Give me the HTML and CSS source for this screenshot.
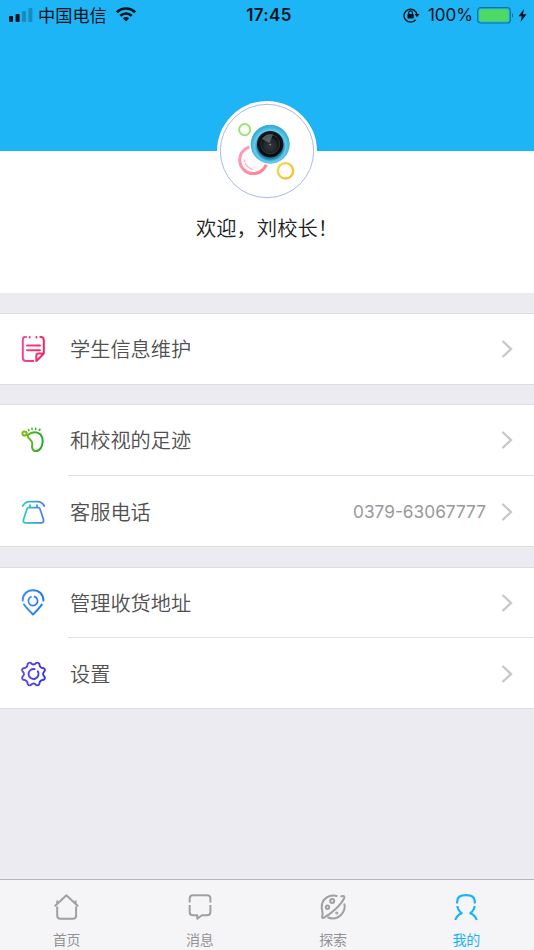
FILE: index.html
```
<!DOCTYPE html>
<html lang="zh-CN">
<head>
    <meta charset="utf-8">
    <title>我的</title>
    <link rel="stylesheet" href="styles.css">
</head>
<body>
    <div class="header">
        <div class="status-bar">
            <div class="status-left">
                <svg class="signal" width="24" height="14" viewBox="0 0 24 14">
                    <rect x="0" y="8" width="4" height="6" rx="1"/>
                    <rect x="6.6" y="6" width="4" height="8" rx="1"/>
                    <rect x="13" y="3" width="4" height="11" rx="1" opacity=".25"/>
                    <rect x="19.4" y="0" width="4" height="14" rx="1" opacity=".25"/>
                </svg>
                <span class="carrier">中国电信</span>
                <svg class="wifi" width="20" height="15" viewBox="0 0 20 15">
                    <g fill="none" stroke="#06131b" stroke-width="2.6">
                        <path d="M.9 5.3C6 .2 14 .2 19.1 5.3"/>
                        <path d="M4.3 8.8C7.5 5.7 12.5 5.7 15.7 8.8"/>
                    </g>
                    <path d="M6.9 11.3C8.7 9.7 11.3 9.7 13.1 11.3L10 14.5z" fill="#06131b"/>
                </svg>
            </div>
            <div class="time">17:45</div>
            <div class="status-right">
                <svg width="17" height="16" viewBox="0 0 17 16">
                    <path d="M12.6 12.7A6.5 6.5 0 1 1 14 8" fill="none" stroke="#06131b" stroke-width="1.4"/>
                    <path d="M11.5 7h5l-2.5 3.3z" fill="#06131b"/>
                    <rect x="4.5" y="7" width="6.2" height="4.4" rx=".6" fill="#06131b"/>
                    <path d="M5.8 7V5.6a1.8 1.8 0 0 1 3.6 0V7" fill="none" stroke="#06131b" stroke-width="1.2"/>
                </svg>
                <span class="percent">100%</span>
                <svg class="battery" width="38" height="17" viewBox="0 0 38 17">
                    <rect x=".7" y=".7" width="32.6" height="15.3" rx="3" fill="none" stroke="#176f96" stroke-width="1.2"/>
                    <rect x="2.3" y="2.3" width="29.4" height="12.1" rx="1.5" fill="#4cd964"/>
                    <path d="M35 5.8q2.3 2.6 0 5.2z" fill="#176f96"/>
                </svg>
                <svg width="9" height="13" viewBox="0 0 9 13">
                    <path d="M6 0L.5 7.3h3.3L2.6 13 8.5 5.3H5z" fill="#06131b"/>
                </svg>
            </div>
        </div>
    </div>

    <div class="profile">
        <div class="avatar">
            <svg width="100" height="100" viewBox="0 0 100 100">
                <defs>
                    <radialGradient id="ring" cx=".5" cy=".55" r=".5">
                        <stop offset=".65" stop-color="#1f7fa8"/>
                        <stop offset=".8" stop-color="#64cdee"/>
                        <stop offset="1" stop-color="#3caed6"/>
                    </radialGradient>
                    <radialGradient id="lens" cx=".5" cy=".55" r=".5">
                        <stop offset="0" stop-color="#34383b"/>
                        <stop offset=".5" stop-color="#20262a"/>
                        <stop offset=".75" stop-color="#070a0c"/>
                        <stop offset="1" stop-color="#15191c"/>
                    </radialGradient>
                    <linearGradient id="pink" x1="0" y1="0" x2="1" y2="1">
                        <stop offset="0" stop-color="#f3a5bd"/>
                        <stop offset="1" stop-color="#ff7f91"/>
                    </linearGradient>
                    <linearGradient id="yellow" x1="0" y1="0" x2="1" y2="1">
                        <stop offset="0" stop-color="#f2dc4c"/>
                        <stop offset="1" stop-color="#f2bd2c"/>
                    </linearGradient>
                </defs>
                <circle cx="50" cy="50" r="50" fill="#fff"/>
                <circle cx="50" cy="50" r="46.7" fill="none" stroke="#a9baf0"/>
                <circle cx="27.7" cy="28.7" r="5.6" fill="none" stroke="#9be475" stroke-width="2"/>
                <circle cx="36.3" cy="59" r="13.6" fill="#fffafb" stroke="url(#pink)" stroke-width="3"/>
                <path d="M28 62q3 5.5 8 6.5M27 58.5q1 1.5 1 2.5" fill="none" stroke="#ffabb8" stroke-width="1.2"/>
                <circle cx="53.2" cy="43.2" r="21" fill="#fff"/>
                <circle cx="53.2" cy="43.2" r="19.5" fill="url(#ring)"/>
                <circle cx="53.2" cy="43.2" r="13.2" fill="url(#lens)"/>
                <circle cx="53.2" cy="43.2" r="9.5" fill="none" stroke="#454b4e" stroke-width=".7"/>
                <path d="M45 38q4-6 11-4.5l-3.5 8.5z" fill="#7b858a" opacity=".6"/>
                <circle cx="53.2" cy="43.5" r=".8" fill="#91a5aa"/>
                <circle cx="68.5" cy="69.8" r="7.7" fill="#fffefa" stroke="url(#yellow)" stroke-width="2.3"/>
            </svg>
        </div>
        <div class="welcome">欢迎，刘校长！</div>
    </div>

    <div class="group">
        <div class="row">
            <svg class="icon" viewBox="0 0 30 30" stroke="url(#gPink)">
                <defs>
                    <linearGradient id="gPink" gradientUnits="userSpaceOnUse" x1="4" y1="0" x2="27" y2="0">
                        <stop offset="0" stop-color="#f7449b"/>
                        <stop offset="1" stop-color="#f4235c"/>
                    </linearGradient>
                </defs>
                <path d="M6.5 3Q4.8 3.3 4.8 6V23.5Q4.8 27 8.3 27H15.3M23.3 3Q25.8 3.3 25.8 6.5V19.5L18.5 27M25.8 19.5H20.5Q18.3 19.5 18.3 21.7V27M9 11.4H22M9 16.2H22"/>
                <path d="M8 3h.1M11.7 3v.6M18.4 3v.6M22.3 3h.1"/>
            </svg>
            <div class="label">学生信息维护</div>
            <svg class="arrow" viewBox="0 0 12 20"><path d="M1.5 2L10 10 1.5 18"/></svg>
        </div>
    </div>

    <div class="group">
        <div class="row">
            <svg class="icon" viewBox="0 0 30 30" stroke="url(#gGreen)">
                <defs>
                    <linearGradient id="gGreen" gradientUnits="userSpaceOnUse" x1="4" y1="0" x2="25" y2="0">
                        <stop offset="0" stop-color="#87bd10"/>
                        <stop offset="1" stop-color="#20aa32"/>
                    </linearGradient>
                </defs>
                <circle cx="6.5" cy="8.5" r="2.1"/>
                <path d="M9.5 10.3C9.7 14.8 14.8 14.3 14.3 18.8C13.5 22.5 14.4 26.1 18 26.1C22.2 26.1 24.6 20.8 24.7 16.2C24.8 10.4 21.3 7.2 17 7.2C14 7.2 11.7 8.3 9.5 10.3"/>
                <path d="M10.5 4.6l.5 1M13.9 3.3l.2 1M17.7 3.3l-.1 1M21.9 4.4l-.5.8" stroke-width="1.7"/>
            </svg>
            <div class="label">和校视的足迹</div>
            <svg class="arrow" viewBox="0 0 12 20"><path d="M1.5 2L10 10 1.5 18"/></svg>
        </div>
        <div class="row">
            <svg class="icon" viewBox="0 0 30 30" stroke="url(#gTeal)">
                <defs>
                    <linearGradient id="gTeal" gradientUnits="userSpaceOnUse" x1="4" y1="0" x2="26" y2="0">
                        <stop offset="0" stop-color="#25d5b2"/>
                        <stop offset="1" stop-color="#4e7df0"/>
                    </linearGradient>
                </defs>
                <path d="M4.7 9Q7.2 4.7 11.5 4.7H19.5Q24 4.7 26.3 9" stroke-width="1.8"/>
                <path d="M12 8.2v2.3M19 8.2v2.3M10.5 10.6H20.5Q21.5 10.6 22 12L25.5 22.5Q26.2 25.7 23 25.8H7.8Q4.7 25.7 5.5 22.5L9 12Q9.5 10.6 10.5 10.6" stroke-width="1.8"/>
            </svg>
            <div class="label">客服电话</div>
            <div class="value">0379-63067777</div>
            <svg class="arrow" viewBox="0 0 12 20"><path d="M1.5 2L10 10 1.5 18"/></svg>
        </div>
    </div>

    <div class="group last">
        <div class="row">
            <svg class="icon" viewBox="0 0 30 30" stroke="url(#gBlue)">
                <defs>
                    <linearGradient id="gBlue" gradientUnits="userSpaceOnUse" x1="4" y1="0" x2="26" y2="0">
                        <stop offset="0" stop-color="#3b94f5"/>
                        <stop offset="1" stop-color="#1c75ee"/>
                    </linearGradient>
                </defs>
                <path d="M4.7 12.5C4.7 6 9 2.2 15 2.2S25.4 6 25.4 12.5"/>
                <path d="M6 16.5Q8 19.500 15 26.5Q22 19.5 23.8 16.5"/>
                <path d="M16.5 8.600A4.600 4.600 0 1 1 13 8.800" stroke-width="1.7"/>
            </svg>
            <div class="label">管理收货地址</div>
            <svg class="arrow" viewBox="0 0 12 20"><path d="M1.5 2L10 10 1.5 18"/></svg>
        </div>
        <div class="row">
            <svg class="icon" viewBox="0 0 30 30" stroke="url(#gViolet)">
                <defs>
                    <linearGradient id="gViolet" gradientUnits="userSpaceOnUse" x1="-12" y1="0" x2="12" y2="0">
                        <stop offset="0" stop-color="#5b50e8"/>
                        <stop offset="1" stop-color="#3534e5"/>
                    </linearGradient>
                </defs>
                <g transform="translate(15.5 15)" stroke-width="1.9">
                    <path d="M11.1 2.8Q11.9 4.7 10.3 5.8Q5.9 5.9 5.8 10.3Q4.7 11.9 2.8 11.1Q0 7.9-2.8 11.1Q-4.7 11.9-5.8 10.3Q-5.9 5.9-10.3 5.8Q-11.9 4.7-11.1 2.8Q-7.9 0-11.1-2.8Q-11.9-4.7-10.3-5.8Q-5.9-5.9-5.8-10.3Q-4.7-11.9-2.8-11.1Q0-7.9 2.8-11.1Q4.7-11.9 5.8-10.3Q5.9-5.9 10.3-5.8Q11.9-4.7 11.1-2.8Q7.9 0 11.1 2.8z"/>
                    <path d="M4.3-2.7A5 5 0 1 1 1.2-4.9"/>
                </g>
            </svg>
            <div class="label">设置</div>
            <svg class="arrow" viewBox="0 0 12 20"><path d="M1.5 2L10 10 1.5 18"/></svg>
        </div>
    </div>

    <div class="tab-bar">
        <div class="tab">
            <svg class="tab-icon" viewBox="0 0 30 30">
                <path d="M2.7 14.2L14.4 3.3 26.1 14.2M5.2 11.5V8.5M23.6 11.5V8.5M5.2 14.5V23.5Q5.2 26.8 8.4 26.8H20.9Q24.1 26.8 24.1 23.5V14.5"/>
            </svg>
            <span>首页</span>
        </div>
        <div class="tab">
            <svg class="tab-icon" viewBox="0 0 30 30">
                <path d="M4.7 10.5V6.5Q4.7 3.2 8 3.2H22Q25.4 3.2 25.4 6.5V10.5M4.7 13V20Q4.7 23.3 8 23.3H12.3V26.8L17 23.3H22Q25.4 23.3 25.4 20V13"/>
            </svg>
            <span>消息</span>
        </div>
        <div class="tab">
            <svg class="tab-icon" viewBox="0 0 30 30">
                <path d="M19.5 4.3C12 1.5 3.7 6.5 3.7 15C3.7 19 5.5 20.2 4.2 24.2Q3.5 26.6 6 25.7C13 22 22.5 13.5 26 6.5Q27.3 3.8 24.5 4L22.5 4.6M26.3 11.5C28.5 20 20 29.5 9.5 25.3"/>
                <circle cx="14.2" cy="9" r="2"/>
                <circle cx="9.5" cy="15.3" r="1.7"/>
                <circle cx="18.8" cy="21" r=".6"/>
            </svg>
            <span>探索</span>
        </div>
        <div class="tab active">
            <svg class="tab-icon" viewBox="0 0 30 30">
                <path d="M6.2 11.5V9.5C6.2 5.2 9.5 3.2 15 3.2S23.8 5.2 23.8 9.5V11.5M6.4 14C6.7 17.5 8.3 19.5 10.7 21.2C7.5 22.5 5.2 25 4.3 28M23.6 14C23.3 17.5 21.7 19.5 19.3 21.2C22.5 22.5 24.8 25 25.7 28"/>
            </svg>
            <span>我的</span>
        </div>
    </div>
</body>
</html>
```

FILE: styles.css
```
* {
    box-sizing: border-box;
}
body {
    margin: 0;
    height: 950px;
    display: flex;
    flex-direction: column;
    background-color: #ebebf1;
    font-family: Inter, "Noto Sans CJK SC", sans-serif;
    color: #505050;
    overflow: hidden;
}
svg {
    display: block;
    flex: none;
}
.header {
    height: 151px;
    background-color: #1eb5f6;
}
.status-bar {
    height: 30px;
    padding: 0 7px 0 9px;
    display: grid;
    grid-template-columns: 1fr auto 1fr;
    align-items: center;
    color: #06131b;
    font-size: 17px;
}
.status-left,
.status-right {
    display: flex;
    align-items: center;
}
.status-left {
    height: 28px;
    align-self: start;
}
.status-right {
    justify-content: flex-end;
}
.signal {
    margin-top: 2px;
    fill: #06131b;
}
.carrier {
    margin-left: 5px;
    font-family: "Noto Sans CJK SC", sans-serif;
    font-size: 17.2px;
}
.wifi {
    margin: 1px 0 0 9px;
}
.time {
    padding-left: 2px;
    font-weight: 600;
    letter-spacing: 0.3px;
}
.percent {
    margin: 0 4px 0 8px;
}
.battery {
    margin-right: 3px;
}
.profile {
    height: 142px;
    background-color: #fff;
    display: flex;
    flex-direction: column;
    align-items: center;
}
.avatar {
    margin-top: -50px;
    border-radius: 50%;
    box-shadow: 0 0 3px rgba(0, 0, 0, 0.04);
}
.welcome {
    margin-top: 11px;
    font-family: "Noto Sans CJK SC", sans-serif;
    font-size: 20.3px;
    font-weight: 350;
    line-height: 30px;
    color: #222;
}
.group {
    margin-top: 20px;
    background-color: #fff;
    border-top: 1px solid #dedee2;
    border-bottom: 1px solid #dedee2;
}
.group + .group {
    margin-top: 19px;
}
.group.last {
    margin-top: 20px;
}
.row {
    height: 70px;
    padding: 0 21px 0 18px;
    display: flex;
    align-items: center;
    position: relative;
}
.group.last .row:first-child {
    height: 69px;
}
.row + .row {
    height: 71px;
    padding-top: 2px;
}
.row + .row::before {
    content: "";
    position: absolute;
    top: 0;
    left: 68px;
    right: 0;
    height: 1px;
    background-color: #e0e0e3;
}
.icon {
    width: 30px;
    height: 30px;
    margin-right: 22px;
    fill: none;
    stroke-width: 2;
    stroke-linecap: round;
    stroke-linejoin: round;
}
.label {
    flex: 1;
    font-family: "Noto Sans CJK SC", sans-serif;
    font-size: 20.2px;
    font-weight: 350;
    line-height: 30px;
}
.value {
    margin-right: 15px;
    padding-bottom: 1px;
    font-size: 17.3px;
    color: #999;
}
.arrow {
    width: 12px;
    height: 20px;
    fill: none;
    stroke: #c7c7cc;
    stroke-width: 2.3;
}
.tab-bar {
    height: 71px;
    padding-right: 1px;
    margin-top: auto;
    display: flex;
    background-color: #f5f5f8;
    border-top: 1px solid #b5b5bb;
}
.tab {
    flex: 1;
    padding-top: 12px;
    display: flex;
    flex-direction: column;
    align-items: center;
    color: #929292;
    font-family: "Noto Sans CJK SC", sans-serif;
    font-size: 14px;
    line-height: 20px;
}
.tab span {
    margin-top: 7px;
}
.tab-icon {
    width: 30px;
    height: 30px;
    fill: none;
    stroke: #a0a0a0;
    stroke-width: 2;
    stroke-linejoin: round;
}
.tab.active {
    color: #18b3f8;
}
.tab.active .tab-icon {
    stroke: #18b3f8;
    stroke-width: 2.2;
}
```
